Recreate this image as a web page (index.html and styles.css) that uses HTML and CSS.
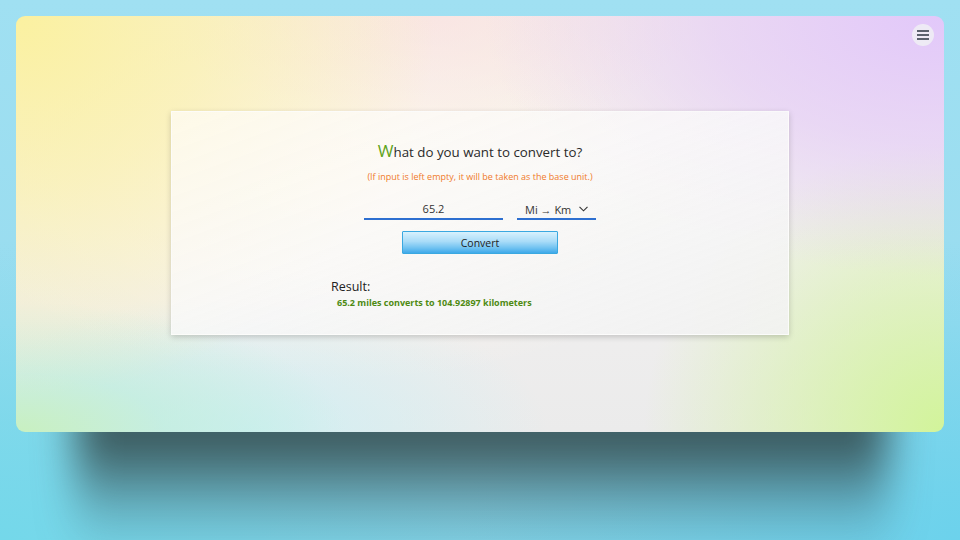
FILE: index.html
```html
<!DOCTYPE html>
<html>
<head>
<meta charset="utf-8">
<link rel="stylesheet" href="styles.css">
</head>
<body>
<div class="window">
  <button class="menu" aria-label="Menu">
    <svg width="12" height="10" viewBox="0 0 12 10"><path d="M0 1h12M0 5h12M0 9h12" stroke="#2b3440" stroke-width="1.6"/></svg>
  </button>
  <div class="card">
    <h1 class="title"><span class="big">W</span>hat do you want to convert to?</h1>
    <p class="hint">(If input is left empty, it will be taken as the base unit.)</p>
    <div class="row">
      <div class="field">65.2</div>
      <div class="select">Mi → Km
        <svg width="9" height="6" viewBox="0 0 9 6"><path d="M0.5 0.8 4.5 4.8 8.5 0.8" fill="none" stroke="#333" stroke-width="1.1"/></svg>
      </div>
    </div>
    <button class="convert">Convert</button>
    <div class="result">
      <div class="label">Result:</div>
      <div class="value">65.2 miles converts to 104.92897 kilometers</div>
    </div>
  </div>
</div>
</body>
</html>
```
FILE: styles.css
```css
html, body { margin: 0; height: 100%; }
body {
  padding: 16px;
  box-sizing: border-box;
  font-family: "Open Sans", "Noto Sans", sans-serif;
  background:
    radial-gradient(ellipse 500px 300px at 0% 100%, #74d8ea 0%, rgba(116,216,234,0) 100%),
    radial-gradient(ellipse 500px 300px at 100% 100%, #6cd2ec 0%, rgba(108,210,236,0) 100%),
    linear-gradient(180deg, #a0e0f2 0%, #98dcef 60%, #86d6ea 100%);
  overflow: hidden;
}
.window {
  position: relative;
  height: 416px;
  border-radius: 9px;
  display: flex;
  justify-content: center;
  align-items: flex-start;
  padding-top: 95px;
  box-sizing: border-box;
  background:
    radial-gradient(ellipse 420px 380px at 0% 0%, #fbf1a0 0%, rgba(251,241,165,0.65) 45%, rgba(251,241,165,0) 100%),
    radial-gradient(ellipse 460px 260px at 100% 0%, #e2c8fa 0%, rgba(226,200,250,0.6) 50%, rgba(226,200,250,0) 100%),
    radial-gradient(ellipse 260px 120px at 45% 0%, rgba(250,225,225,0.7) 0%, rgba(250,225,225,0) 100%),
    radial-gradient(ellipse 300px 290px at 100% 100%, #d2f49a 0%, rgba(210,244,154,0.5) 50%, rgba(210,244,154,0) 100%),
    radial-gradient(ellipse 330px 130px at 0% 100%, #c8f0c0 0%, rgba(190,238,220,0.7) 45%, rgba(190,238,220,0) 100%),
    radial-gradient(ellipse 300px 140px at 25% 100%, rgba(200,240,245,0.8) 0%, rgba(200,240,245,0) 100%),
    radial-gradient(ellipse 400px 200px at 35% 40%, #fff6ea 0%, rgba(255,246,234,0) 100%),
    linear-gradient(180deg, #f6efe8 0%, #f2f0f0 50%, #ebebeb 100%);
}
.window::after {
  content: "";
  position: absolute;
  left: 60px;
  right: 56px;
  top: 380px;
  height: 160px;
  background: linear-gradient(180deg, rgba(40,55,55,0.85) 0%, rgba(40,55,55,0.75) 30%, rgba(50,80,90,0.25) 70%, rgba(60,100,110,0) 100%);
  filter: blur(20px);
  z-index: -1;
}
.menu {
  position: absolute;
  top: 8px;
  right: 10px;
  width: 22px;
  height: 22px;
  border-radius: 50%;
  border: none;
  padding: 0;
  background: rgba(240,240,245,0.85);
  display: flex;
  align-items: center;
  justify-content: center;
}
.card {
  width: 618px;
  height: 224px;
  box-sizing: border-box;
  background: linear-gradient(160deg, rgba(255,252,246,0.75) 0%, rgba(250,250,250,0.8) 45%, rgba(242,242,242,0.92) 100%);
  border: 1px solid rgba(255,255,255,0.6);
  box-shadow: 0 2px 6px rgba(0,0,0,0.18);
  display: flex;
  flex-direction: column;
  align-items: center;
  padding-top: 28px;
}
.title {
  margin: 0;
  font-weight: 400;
  font-size: 13.3px;
  color: #2a2a2a;
  line-height: 22px;
}
.title .big { color: #5ea31a; font-size: 17px; }
.hint {
  margin: 8px 0 0;
  font-size: 9px;
  color: #f07a2a;
  line-height: 12px;
}
.row {
  display: flex;
  gap: 14px;
  margin-top: 17px;
}
.field {
  width: 139px;
  height: 20px;
  box-sizing: border-box;
  border-bottom: 2px solid #2d6fd0;
  text-align: center;
  font-size: 11px;
  line-height: 17px;
  color: #333;
}
.select {
  width: 79px;
  height: 20px;
  box-sizing: border-box;
  border-bottom: 2px solid #2d6fd0;
  font-size: 11px;
  line-height: 17px;
  color: #333;
  display: flex;
  align-items: center;
  justify-content: space-between;
  padding: 0 8px 0 8px;
}
.convert {
  margin-top: 11px;
  width: 156px;
  height: 23px;
  border: 1px solid #3aa8e0;
  border-radius: 1px;
  background: linear-gradient(180deg, #d8f1fd 0%, #a9dcf8 45%, #72c3f1 75%, #3fa9ea 100%);
  font-family: inherit;
  font-size: 10.5px;
  color: #222;
  padding: 0;
}
.result {
  width: 298px;
  margin-top: 25px;
}
.label {
  font-size: 12.5px;
  color: #222;
  line-height: 16px;
}
.value {
  padding-left: 6px;
  margin-top: 1px;
  font-size: 9px;
  font-weight: 700;
  color: #4e8a12;
  line-height: 14px;
}
```
